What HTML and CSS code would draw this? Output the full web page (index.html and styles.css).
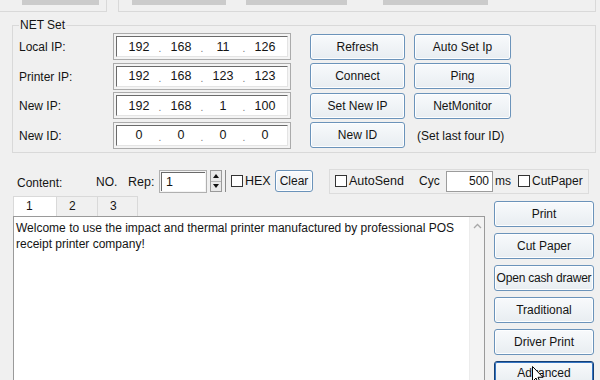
FILE: index.html
```html
<!DOCTYPE html>
<html>
<head>
<meta charset="utf-8">
<link rel="stylesheet" href="styles.css">
</head>
<body>
<div class="win">
  <div class="top">
    <div class="tg tg1"><span class="tbar tb1"></span></div>
    <div class="tg tg2"><span class="tbar tb2"></span><span class="tbar tb3"></span><span class="tbar tb4"></span></div>
  </div>

  <fieldset class="net">
    <legend>NET Set</legend>
    <div class="netgrid">
      <span class="lbl">Local IP:</span>
      <div class="ip"><div class="ipin"><span>192</span><i>.</i><span>168</span><i>.</i><span>11</span><i>.</i><span>126</span></div></div>
      <button class="btn nb">Refresh</button>
      <button class="btn nb2">Auto Set Ip</button>

      <span class="lbl">Printer IP:</span>
      <div class="ip"><div class="ipin"><span>192</span><i>.</i><span>168</span><i>.</i><span>123</span><i>.</i><span>123</span></div></div>
      <button class="btn nb">Connect</button>
      <button class="btn nb2">Ping</button>

      <span class="lbl">New IP:</span>
      <div class="ip"><div class="ipin"><span>192</span><i>.</i><span>168</span><i>.</i><span>1</span><i>.</i><span>100</span></div></div>
      <button class="btn nb">Set New IP</button>
      <button class="btn nb2">NetMonitor</button>

      <span class="lbl">New ID:</span>
      <div class="ip"><div class="ipin"><span>0</span><i>.</i><span>0</span><i>.</i><span>0</span><i>.</i><span>0</span></div></div>
      <button class="btn nb">New ID</button>
      <span class="note">(Set last four ID)</span>
    </div>
  </fieldset>

  <div class="ctrl">
    <span class="c-content">Content:</span>
    <span class="c-no">NO.</span>
    <span class="c-rep">Rep:</span>
    <div class="spin"><div class="spinin">1</div></div>
    <div class="spinbtn">
      <span class="sb"><svg width="6" height="4" viewBox="0 0 6 4"><path d="M0 4 L3 0 L6 4 Z" fill="#111"/></svg></span>
      <span class="sb"><svg width="6" height="4" viewBox="0 0 6 4"><path d="M0 0 L3 4 L6 0 Z" fill="#111"/></svg></span>
    </div>
    <span class="vsep"></span>
    <span class="chk c-hexbox"></span><span class="c-hex">HEX</span>
    <button class="btn clear">Clear</button>
    <div class="panel">
      <span class="chk"></span><span class="p-auto">AutoSend</span>
      <span class="p-cyc">Cyc</span>
      <div class="cycbox">500</div>
      <span class="p-ms">ms</span>
      <span class="chk p-cutbox"></span><span class="p-cut">CutPaper</span>
    </div>
  </div>

  <div class="main">
    <div class="editor">
      <div class="tabs">
        <span class="tab t1 sel">1</span><span class="tab t2">2</span><span class="tab t3">3</span>
      </div>
      <div class="txt">
        <p class="content">Welcome to use the impact and thermal printer manufactured by professional POS receipt printer company!</p>
        <div class="vscroll"><svg width="9" height="6" viewBox="0 0 9 6"><path d="M1 5 L4.5 1.5 L8 5" fill="none" stroke="#a8a8a8" stroke-width="1.3"/></svg></div>
      </div>
    </div>
    <div class="side">
      <button class="btn sbtn">Print</button>
      <button class="btn sbtn">Cut Paper</button>
      <button class="btn sbtn tight">Open cash drawer</button>
      <button class="btn sbtn">Traditional</button>
      <button class="btn sbtn">Driver Print</button>
      <button class="btn sbtn adv">Advanced</button>
    </div>
  </div>

  <svg class="cursor" width="12" height="19" viewBox="0 0 12 19"><path d="M0.5 0.5 L0.5 15.5 L4 12 L6.5 18 L8.5 17 L6 11.3 L11 11.3 Z" fill="#fff" stroke="#000" stroke-width="1"/></svg>
</div>
</body>
</html>
```

FILE: styles.css
```css
* { box-sizing: border-box; }
html, body { margin: 0; padding: 0; }
body {
  width: 600px;
  height: 380px;
  overflow: hidden;
  background: #f0f0f0;
  font: 12px "Liberation Sans", Arial, sans-serif;
  color: #141414;
}
.win { position: relative; width: 600px; height: 380px; }

/* top strip */
.top { display: flex; height: 12px; }
.tg { display: flex; align-items: flex-start; border-bottom: 1px solid #d9d9d9; }
.tg1 { width: 107px; border-right: 1px solid #d9d9d9; padding-left: 22px; }
.tg2 { margin-left: 11px; width: 478px; border-left: 1px solid #d9d9d9; border-right: 1px solid #d9d9d9; }
.tbar { display: block; height: 5px; background: #cbcbcb; }
.tb1 { width: 77px; }
.tb2 { width: 94px; margin-left: 13px; }
.tb3 { width: 101px; margin-left: 20px; }
.tb4 { width: 105px; margin-left: 36px; }

/* NET set */
.net {
  margin: 6px 0 0 12px;
  width: 584px;
  border: 1px solid #d9d9d9;
  padding: 0;
  min-width: 0;
}
.net legend {
  margin-left: 6px;
  padding: 0 1px;
  line-height: 14px;
  font-size: 12px;
}
.netgrid {
  display: grid;
  grid-template-columns: 94px 197px 104px 97px;
  grid-auto-rows: 27px;
  row-gap: 2.5px;
  padding: 1px 0 3px 6px;
  align-items: center;
}
.lbl { padding-top: 1px; }
.ip {
  width: 178px;
  height: 27px;
  border: 1px solid #ababab;
  padding: 2px;
  background: #f4f4f4;
}
.ipin {
  height: 100%;
  background: #fff;
  border-top: 1px solid #6a6a6a;
  border-left: 1px solid #6a6a6a;
  border-right: 1px solid #e4e4e4;
  border-bottom: 1px solid #e4e4e4;
  display: flex;
  align-items: center;
  padding-left: 3px;
}
.ipin span { width: 38px; text-align: center; font-size: 12.5px; }
.ipin i { width: 4px; font-style: normal; text-align: center; color: #777; font-size: 10px; padding-top: 4px; }

.btn {
  font: 12px "Liberation Sans", Arial, sans-serif;
  color: #141414;
  border: 1px solid #6b93ba;
  border-radius: 3px;
  background: linear-gradient(#f8fafc, #e8edf1);
  box-shadow: inset 0 0 0 1px #fdfeff;
  padding: 0;
  height: 26px;
  text-align: center;
  white-space: nowrap;
}
.nb { width: 95px; }
.nb2 { width: 97px; }
.note { padding-left: 3px; padding-top: 1px; }

/* controls row */
.ctrl {
  display: flex;
  align-items: center;
  height: 25px;
  margin-top: 16px;
}
.c-content { margin-left: 17px; width: 79px; padding-top: 4px; }
.c-no { width: 32px; padding-top: 2px; }
.c-rep { width: 31px; padding-top: 2px; font-size: 12.5px; }
.spin {
  width: 48px;
  height: 23px;
  border: 1px solid #b0b0b0;
  padding: 1px;
  background: #f4f4f4;
}
.spinin {
  height: 100%;
  background: #fff;
  border-top: 1px solid #6a6a6a;
  border-left: 1px solid #6a6a6a;
  padding-left: 4px;
  line-height: 18px;
  font-size: 12.5px;
}
.spinbtn {
  margin-left: 3px;
  width: 12px;
  height: 22px;
  display: flex;
  flex-direction: column;
  border: 1px solid #9a9a9a;
  background: #e9e9e9;
}
.sb { flex: 1; display: flex; align-items: center; justify-content: center; }
.sb + .sb { border-top: 1px solid #b5b5b5; }
.vsep { margin-left: 3px; width: 1px; height: 22px; background: #8a8a8a; }
.chk {
  width: 12px;
  height: 12px;
  border: 1px solid #333;
  background: #fff;
  flex: none;
}
.c-hexbox { margin-left: 5px; }
.c-hex { margin-left: 2px; width: 28px; font-size: 12.5px; }
.clear { width: 38px; height: 22px; margin-left: 2px; }
.panel {
  margin-left: 16px;
  width: 260px;
  height: 25px;
  border: 1px solid #dcdcdc;
  display: flex;
  align-items: center;
  padding-left: 5px;
  align-self: flex-start;
}
.p-auto { margin-left: 2px; width: 70px; font-size: 12.5px; }
.p-cyc { width: 27px; }
.cycbox {
  width: 47px;
  height: 21px;
  border: 1px solid #9c9c9c;
  background: #fff;
  text-align: right;
  padding-right: 3px;
  line-height: 19px;
}
.p-ms { margin-left: 2px; width: 23px; }
.p-cutbox { margin-left: 0; }
.p-cut { margin-left: 2px; }

/* main */
.main { display: flex; margin-top: 2px; }
.editor { margin-left: 13px; width: 472px; }
.tabs { display: flex; height: 20px; }
.tab {
  border: 1px solid #d9d9d9;
  border-bottom: none;
  background: #f0f0f0;
  padding-left: 12px;
  line-height: 19px;
}
.tab + .tab { border-left: none; }
.tab.sel { background: #fff; }
.t1 { width: 44px; }
.t2 { width: 41px; }
.t3 { width: 40px; }
.txt {
  position: relative;
  display: flex;
  height: 170px;
  background: #fff;
  border: 1px solid #9a9a9a;
}
.content {
  flex: 1;
  margin: 0;
  padding: 3px 2px 0 2px;
  line-height: 16px;
}
.vscroll {
  width: 15px;
  background: #f3f3f3;
  border-left: 1px solid #ececec;
  display: flex;
  justify-content: center;
  padding-top: 6px;
}

.side {
  margin-left: 9px;
  width: 100px;
  padding-top: 5px;
  display: flex;
  flex-direction: column;
  gap: 6px;
}
.sbtn { width: 100px; height: 26px; }
.tight { letter-spacing: -0.2px; }
.adv {
  border: 1px solid #163f74;
  box-shadow: inset 0 0 0 1px #3474c2;
  height: 24px;
}
.cursor { position: absolute; left: 532px; top: 366px; }
```
